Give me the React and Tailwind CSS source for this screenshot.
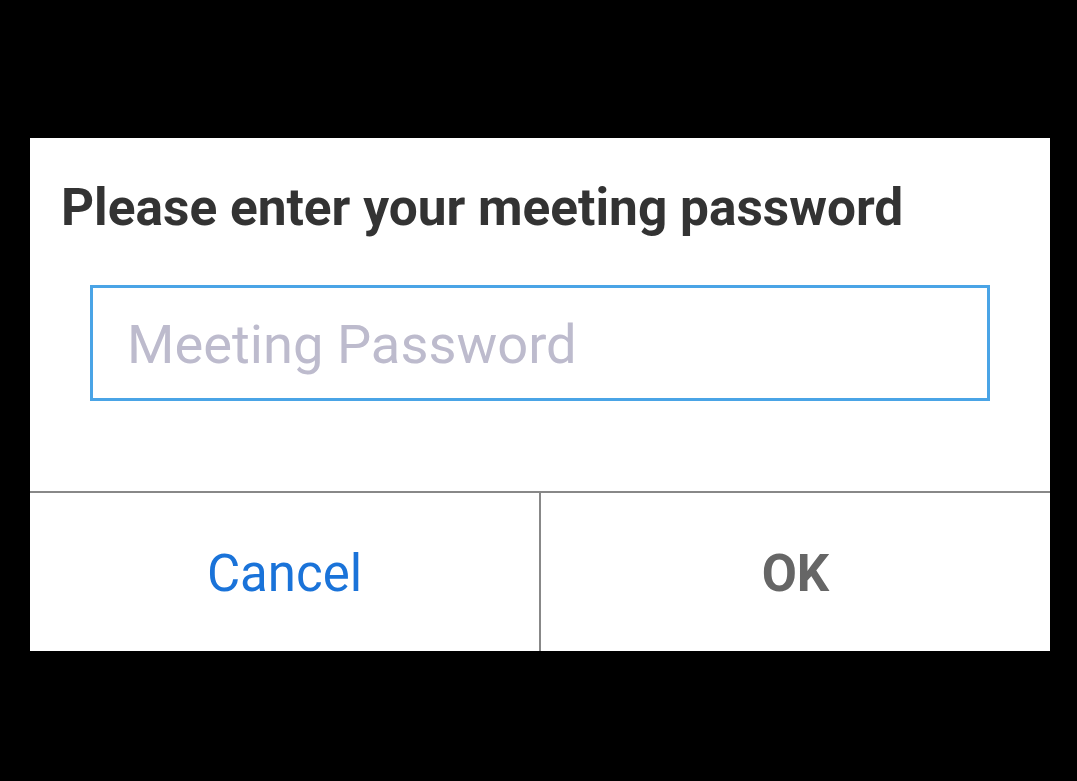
export default function App() {
  return (
    <div className="min-h-screen w-full bg-black pt-[138px] pl-[30px]" style={{ fontFamily: 'Roboto, "Noto Sans", sans-serif' }}>
      <div className="w-[1020px] h-[513px] bg-white flex flex-col">
        <h1 className="mt-[41px] pl-[31px] text-[51.4px] leading-[58px] font-bold text-[#333333]">
          Please enter your meeting password
        </h1>

        <div className="mt-[48px] ml-[60px] w-[900px] h-[116px] border-[3px] border-[#4aa4e6] flex items-center pl-[34px] pt-[4px]">
          <input
            type="password"
            placeholder="Meeting Password"
            className="w-full bg-transparent outline-none text-[54.3px] text-[#333] placeholder:text-[#bdbbcd]"
          />
        </div>

        <div className="mt-auto h-[160px] border-t-2 border-[#888888] flex">
          <button className="flex-1 flex items-center justify-center pt-[4px] text-[51px] text-[#1a73d9] border-r-2 border-[#888888]">
            Cancel
          </button>
          <button className="flex-1 flex items-center justify-center pt-[4px] text-[51px] font-bold text-[#666666]">
            OK
          </button>
        </div>
      </div>
    </div>
  );
}
